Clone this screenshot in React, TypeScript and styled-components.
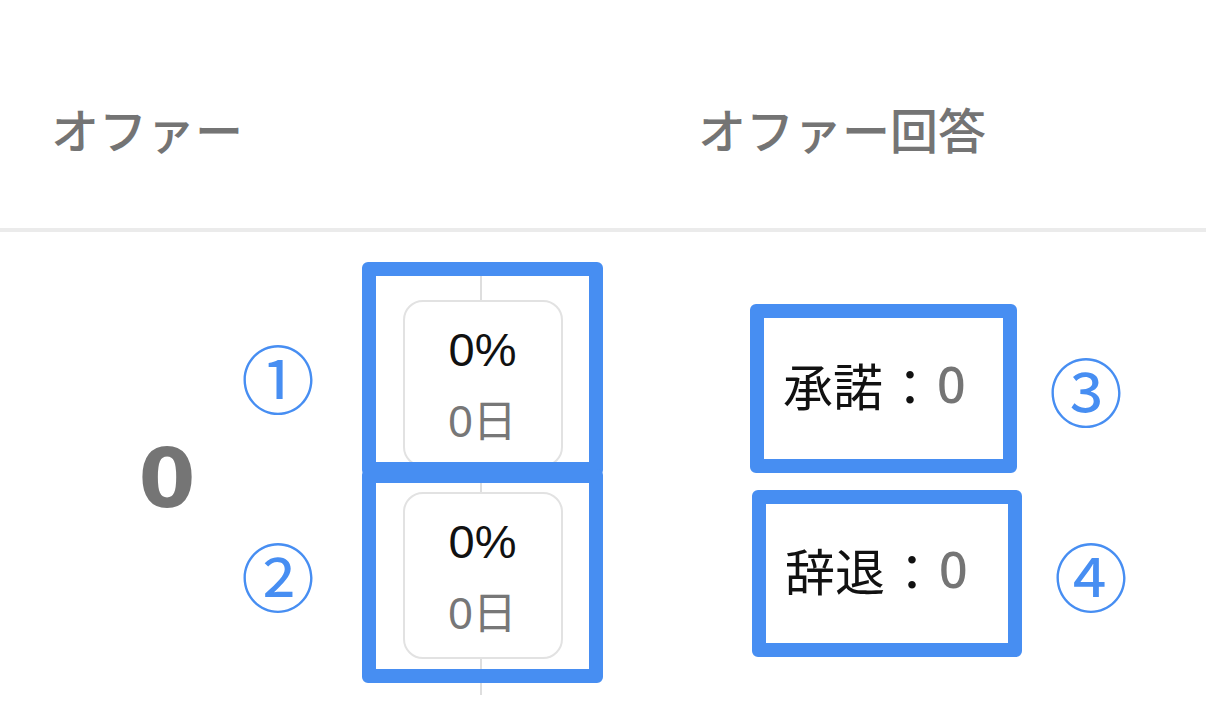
import React from 'react';
import styled, { createGlobalStyle } from 'styled-components';

const GlobalStyle = createGlobalStyle`
  body {
    margin: 0;
    background: #ffffff;
    font-family: 'Liberation Sans', 'Noto Sans CJK JP', sans-serif;
  }
`;

const ANNOTATION = '#478ef2';

const Page = styled.div`
  width: 1206px;
  height: 726px;
  overflow: hidden;
  background: #ffffff;
`;

const Header = styled.div`
  display: grid;
  grid-template-columns: 698px 1fr;
  align-items: center;
  box-sizing: border-box;
  height: 232px;
  padding-top: 28px;
  border-bottom: 4px solid #ebebeb;
`;

const HeaderCell = styled.div<{ $indent?: number }>`
  padding-left: ${({ $indent }) => $indent ?? 0}px;
  font-family: 'Noto Sans CJK JP', sans-serif;
  font-size: 48px;
  font-weight: 500;
  line-height: 1;
  color: #747474;
`;

const Body = styled.div`
  display: flex;
  align-items: flex-start;
  padding-top: 30px;
`;

const TotalCell = styled.div`
  display: flex;
  align-items: center;
  justify-content: center;
  width: 80px;
  height: 421px;
  margin-left: 127px;
  padding-top: 12px;
  box-sizing: border-box;
  font-family: 'DejaVu Sans', sans-serif;
  font-weight: 700;
  font-size: 82px;
  color: #757575;
`;

const MarkerColumn = styled.div`
  display: flex;
  flex-direction: column;
  align-items: center;
  gap: 128px;
  width: 80px;
  margin-left: 31px;
  padding-top: 79px;
`;

const Marker = styled.span`
  display: flex;
  align-items: center;
  justify-content: center;
  width: 72px;
  height: 70px;
  font-family: 'Noto Sans CJK JP', sans-serif;
  font-size: 74px;
  line-height: 1;
  color: ${ANNOTATION};
`;

const StageColumn = styled.div`
  position: relative;
  display: flex;
  flex-direction: column;
  align-items: center;
  gap: 25px;
  width: 241px;
  height: 421px;
  margin-left: 44px;
  padding-top: 38px;
  box-sizing: border-box;

  &::before {
    content: '';
    position: absolute;
    top: 0;
    bottom: -12px;
    left: 118px;
    width: 2px;
    background: #dedede;
  }
`;

const StageCard = styled.div`
  position: relative;
  z-index: 1;
  display: flex;
  flex-direction: column;
  align-items: center;
  width: 160px;
  height: 167px;
  box-sizing: border-box;
  padding-top: 22px;
  border: 2px solid #e2e2e2;
  border-radius: 20px;
  background: #ffffff;
`;

const Rate = styled.div`
  font-size: 47px;
  line-height: 52px;
  color: #111111;
`;

const Days = styled.div`
  margin-top: 22px;
  font-size: 44px;
  line-height: 48px;
  color: #777777;
`;

const AnnotationBox = styled.div<{ $top: number }>`
  position: absolute;
  z-index: 2;
  left: 0;
  right: 0;
  top: ${({ $top }) => $top}px;
  height: 214px;
  box-sizing: border-box;
  border: 14px solid ${ANNOTATION};
  border-radius: 6px;
`;

const ResponseColumn = styled.div`
  display: flex;
  flex-direction: column;
  gap: 17px;
  margin-top: 42px;
  margin-left: 147px;
`;

const ResponseRow = styled.div`
  display: flex;
  align-items: center;
`;

const ResponseBox = styled.div<{ $width: number; $height: number; $shift?: number }>`
  display: flex;
  align-items: center;
  width: ${({ $width }) => $width}px;
  height: ${({ $height }) => $height}px;
  margin-left: ${({ $shift }) => $shift ?? 0}px;
  box-sizing: border-box;
  padding-left: 19px;
  padding-bottom: 10px;
  border: 14px solid ${ANNOTATION};
  border-radius: 6px;
  color: #111111;
`;

const Label = styled.span`
  font-family: 'Noto Sans CJK JP', sans-serif;
  font-size: 50px;
  line-height: 1;
`;

const Colon = styled(Label)`
  display: inline-block;
  width: 54px;
  text-align: center;
`;

const Count = styled.span`
  font-family: 'Noto Sans', sans-serif;
  font-weight: 500;
  font-size: 50px;
  line-height: 1;
  color: #757575;
`;

const SideMarker = styled(Marker)`
  margin-left: 33px;
`;

const stages = [
  { rate: '0%', days: '0日' },
  { rate: '0%', days: '0日' },
];

const responses = [
  { label: '承諾', count: 0, marker: '③', width: 267, height: 169, shift: 0 },
  { label: '辞退', count: 0, marker: '④', width: 270, height: 167, shift: 2 },
];

export default function App() {
  return (
    <Page>
      <GlobalStyle />
      <Header>
        <HeaderCell $indent={51}>オファー</HeaderCell>
        <HeaderCell>オファー回答</HeaderCell>
      </Header>
      <Body>
        <TotalCell>0</TotalCell>
        <MarkerColumn>
          <Marker>①</Marker>
          <Marker>②</Marker>
        </MarkerColumn>
        <StageColumn>
          {stages.map((s, i) => (
            <StageCard key={i}>
              <Rate>{s.rate}</Rate>
              <Days>{s.days}</Days>
            </StageCard>
          ))}
          <AnnotationBox $top={0} />
          <AnnotationBox $top={207} />
        </StageColumn>
        <ResponseColumn>
          {responses.map((r) => (
            <ResponseRow key={r.label}>
              <ResponseBox $width={r.width} $height={r.height} $shift={r.shift}>
                <Label>{r.label}</Label>
                <Colon>：</Colon>
                <Count>{r.count}</Count>
              </ResponseBox>
              <SideMarker>{r.marker}</SideMarker>
            </ResponseRow>
          ))}
        </ResponseColumn>
      </Body>
    </Page>
  );
}
